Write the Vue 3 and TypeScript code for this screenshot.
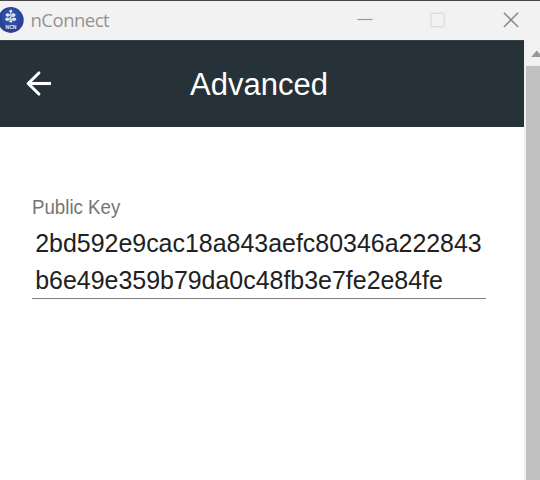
<script setup lang="ts">
const title: string = 'Advanced'
const fieldLabel: string = 'Public Key'
const keyLines: string[] = [
  '2bd592e9cac18a843aefc80346a222843',
  'b6e49e359b79da0c48fb3e7fe2e84fe',
]
</script>

<template>
  <div class="window">
    <header class="titlebar">
      <svg class="logo" width="24" height="26" viewBox="0 0 24 26">
        <circle cx="10.8" cy="13" r="12.9" fill="#2a4395" />
        <circle cx="11" cy="10.5" r="9.5" fill="#2c4ea3" />
        <g fill="#e3e9f7">
          <circle cx="10.8" cy="4.2" r="1.4" />
          <ellipse cx="7.7" cy="8" rx="2.1" ry="1.7" />
          <ellipse cx="13.4" cy="8" rx="2.1" ry="1.8" />
          <ellipse cx="7.3" cy="12.3" rx="2" ry="1.7" />
          <ellipse cx="14" cy="12.3" rx="2.1" ry="1.7" />
          <ellipse cx="10.8" cy="14.3" rx="1.5" ry="1.2" />
        </g>
        <path d="M8 8L14 8.6L8 12L14 12.6M10.8 4.5V14" stroke="#cfd9f3" stroke-width="1.1" fill="none" />
        <text class="logo-text" x="11" y="21.8" text-anchor="middle">NCN</text>
      </svg>
      <span class="app-name">nConnect</span>
      <div class="controls">
        <svg width="16" height="16" viewBox="0 0 16 16"><path d="M.5 7.5H15.5" stroke="#989898" stroke-width="1.2" /></svg>
        <svg width="16" height="16" viewBox="0 0 16 16"><rect x=".9" y="1.2" width="13.4" height="13.6" rx="1.3" fill="none" stroke="#dedede" stroke-width="1.4" /></svg>
        <svg width="16" height="16" viewBox="0 0 16 16"><path d="M.9 .8L15.1 15M15.1 .8L.9 15" fill="none" stroke="#888" stroke-width="1.5" /></svg>
      </div>
    </header>
    <div class="body">
      <main class="page">
        <div class="toolbar">
          <svg class="back" width="28" height="28" viewBox="0 0 28 28">
            <path d="M14.9 3L4.2 13.5L14.9 24" fill="none" stroke="#fff" stroke-width="3.1" stroke-linecap="round" stroke-linejoin="round" />
            <path d="M4.2 13.5H27" stroke="#fff" stroke-width="3.1" />
          </svg>
          <h1 class="title">{{ title }}</h1>
        </div>
        <section class="field">
          <label class="label">{{ fieldLabel }}</label>
          <div class="value">
            <div v-for="line in keyLines" :key="line" class="line">{{ line }}</div>
          </div>
        </section>
      </main>
      <aside class="scrollbar">
        <svg class="up" width="14" height="26" viewBox="0 0 14 26"><path d="M5.2 17L10.8 10.4L16.4 17Z" fill="#979797" /></svg>
        <div class="thumb"></div>
      </aside>
    </div>
  </div>
</template>

<style>
body {
  margin: 0;
  overflow: hidden;
}
</style>

<style scoped>
.window {
  width: 540px;
  height: 480px;
  box-sizing: border-box;
  display: flex;
  flex-direction: column;
  background: #fff;
  border-top: 1px solid #4b4649;
  font-family: "Liberation Sans", Arial, sans-serif;
}
.titlebar {
  height: 39px;
  flex: none;
  box-sizing: border-box;
  padding-bottom: 1px;
  display: flex;
  align-items: center;
  background: #f2f2f2;
}
.logo {
  flex: none;
}
.logo-text {
  font: bold 5px "Liberation Sans", sans-serif;
  fill: #e9eefb;
}
.app-name {
  margin-left: 6.5px;
  font: 18.5px/24px "Open Sans", sans-serif;
  letter-spacing: -0.5px;
  color: #929292;
}
.controls {
  margin-left: auto;
  padding-right: 21px;
  display: flex;
  gap: 57px;
}
.body {
  flex: 1;
  display: flex;
}
.page {
  width: 524px;
}
.toolbar {
  height: 87px;
  box-sizing: border-box;
  display: flex;
  align-items: center;
  padding-left: 24px;
  background: #263238;
  border-top: 1px solid #35424a;
}
.title {
  margin: 2px 0 0 138px;
  font-size: 31px;
  line-height: 36px;
  font-weight: 400;
  color: #fff;
}
.field {
  margin: 69px 38px 0 32px;
}
.label {
  display: block;
  font-size: 18.7px;
  line-height: 24px;
  transform: scaleY(1.06);
  color: #757575;
}
.value {
  padding: 4px 0 0 3.2px;
  border-bottom: 1px solid #808080;
}
.line {
  height: 37px;
  line-height: 38px;
  font-size: 24.95px;
  transform: scaleY(1.05);
  color: #212121;
  white-space: nowrap;
}
.line + .line {
  line-height: 39px;
}
.scrollbar {
  width: 16px;
  box-sizing: border-box;
  padding-left: 2px;
  display: flex;
  flex-direction: column;
  background: #f1f1f1;
}
.up {
  flex: none;
}
.thumb {
  flex: 1;
  background: #c1c1c1;
}
</style>
